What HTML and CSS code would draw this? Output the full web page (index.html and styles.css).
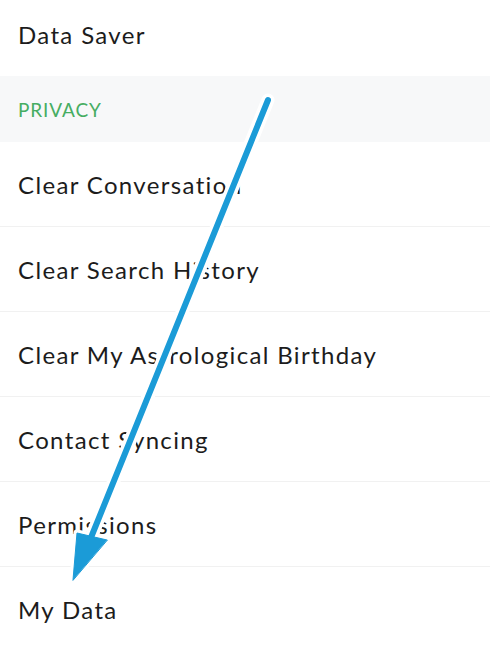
FILE: index.html
```html
<!DOCTYPE html>
<html lang="en">
<head>
  <meta charset="UTF-8" />
  <meta name="viewport" content="width=device-width, initial-scale=1.0"/>
  <title>Settings</title>
  <link rel="stylesheet" href="styles.css">
</head>
<body>

  <div class="settings">
    <div class="row">Data Saver</div>
    <div class="section-title">PRIVACY</div>
    <div class="row">Clear Conversation</div>
    <div class="row">Clear Search History</div>
    <div class="row">Clear My Astrological Birthday</div>
    <div class="row">Contact Syncing</div>
    <div class="row">Permissions</div>
    <div class="row">My Data</div>
  </div>

  <!-- annotation arrow drawn over the list -->
  <svg class="arrow" viewBox="0 0 490 646" width="490" height="646">
    <g fill="#fff" stroke="#fff" stroke-linejoin="round" stroke-linecap="round">
      <line x1="268" y1="100" x2="90" y2="540" stroke-width="13" />
      <polygon points="73,580 77,533 107,540" stroke-width="7" />
    </g>
    <g fill="#1b9bd7" stroke="#1b9bd7" stroke-linejoin="round" stroke-linecap="round">
      <line x1="268" y1="100" x2="90" y2="540" stroke-width="6" />
      <polygon points="73,580 77,533 107,540" stroke-width="1" />
    </g>
  </svg>

</body>
</html>
```

FILE: styles.css
```css
body {
  font-family: Lato, 'Open Sans', sans-serif;
  background: #fff;
  margin: 0;
  overflow: hidden;
  height: 646px;
  position: relative;
}

.settings {
  margin-top: -8px;
}

.row {
  height: 84px;
  display: flex;
  align-items: center;
  padding-left: 18px;
  font-size: 24px;
  letter-spacing: 1.35px;
  color: #1c1c1c;
  border-bottom: 1px solid #f1f1f1;
}

.row:first-child {
  border-bottom: none;
}

.section-title {
  height: 66px;
  display: flex;
  align-items: center;
  padding-left: 18px;
  background-color: #f7f8f9;
  color: #46ad62;
  font-size: 19px;
  letter-spacing: 0.9px;
}

.arrow {
  position: absolute;
  top: 0;
  left: 0;
}
```
